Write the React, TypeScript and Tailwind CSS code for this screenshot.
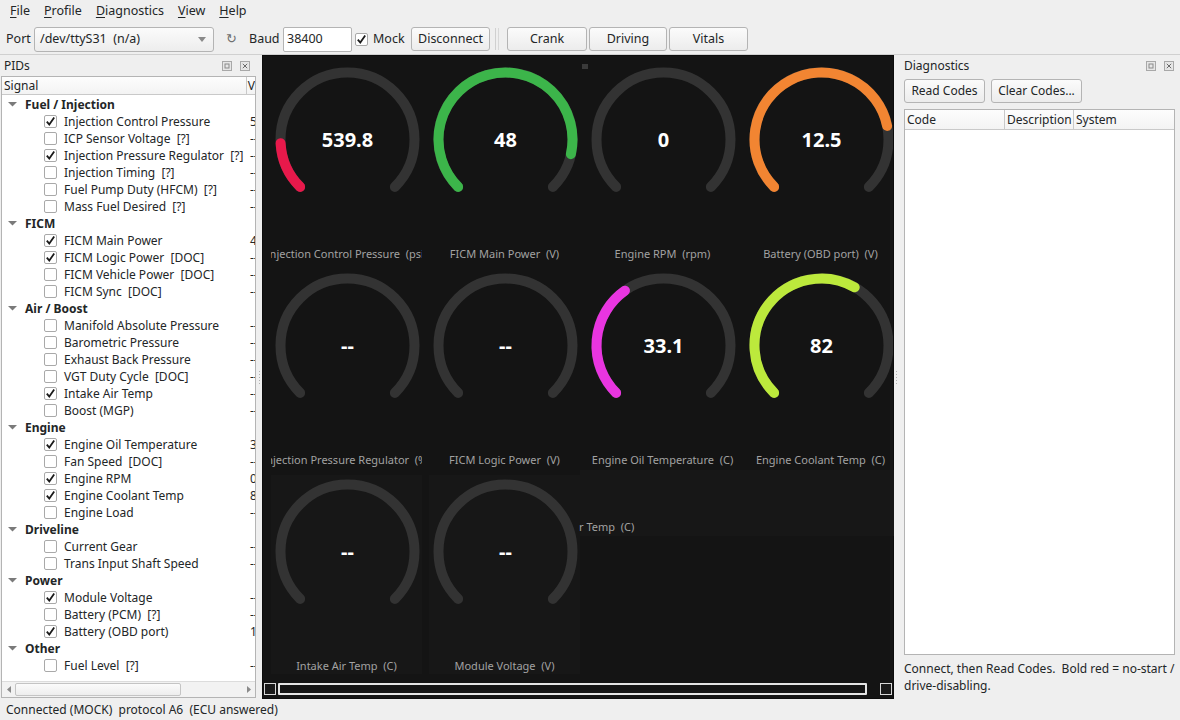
import React from "react";

type G = { label: string; value: string; frac?: number; color?: string };

const gauges: G[] = [
  { label: "Injection Control Pressure  (psi)", value: "539.8", frac: 0.155, color: "#e8194b" },
  { label: "FICM Main Power  (V)", value: "48", frac: 0.88, color: "#3cb54a" },
  { label: "Engine RPM  (rpm)", value: "0", frac: 0 },
  { label: "Battery (OBD port)  (V)", value: "12.5", frac: 0.79, color: "#f28532" },
  { label: "Injection Pressure Regulator  (%)", value: "--" },
  { label: "FICM Logic Power  (V)", value: "--" },
  { label: "Engine Oil Temperature  (C)", value: "33.1", frac: 0.37, color: "#e935e0" },
  { label: "Engine Coolant Temp  (C)", value: "82", frac: 0.61, color: "#bce93c" },
  { label: "Intake Air Temp  (C)", value: "--" },
  { label: "Module Voltage  (V)", value: "--" },
];

type Row = { group?: string; label?: string; checked?: boolean; value?: string };
const rows: Row[] = [
  { group: "Fuel / Injection" },
  { label: "Injection Control Pressure", checked: true, value: "539.8" },
  { label: "ICP Sensor Voltage  [?]", value: "--" },
  { label: "Injection Pressure Regulator  [?]", checked: true, value: "--" },
  { label: "Injection Timing  [?]", value: "--" },
  { label: "Fuel Pump Duty (HFCM)  [?]", value: "--" },
  { label: "Mass Fuel Desired  [?]", value: "--" },
  { group: "FICM" },
  { label: "FICM Main Power", checked: true, value: "48" },
  { label: "FICM Logic Power  [DOC]", checked: true, value: "--" },
  { label: "FICM Vehicle Power  [DOC]", value: "--" },
  { label: "FICM Sync  [DOC]", value: "--" },
  { group: "Air / Boost" },
  { label: "Manifold Absolute Pressure", value: "--" },
  { label: "Barometric Pressure", value: "--" },
  { label: "Exhaust Back Pressure", value: "--" },
  { label: "VGT Duty Cycle  [DOC]", value: "--" },
  { label: "Intake Air Temp", checked: true, value: "--" },
  { label: "Boost (MGP)", value: "--" },
  { group: "Engine" },
  { label: "Engine Oil Temperature", checked: true, value: "33.1" },
  { label: "Fan Speed  [DOC]", value: "--" },
  { label: "Engine RPM", checked: true, value: "0" },
  { label: "Engine Coolant Temp", checked: true, value: "82" },
  { label: "Engine Load", value: "--" },
  { group: "Driveline" },
  { label: "Current Gear", value: "--" },
  { label: "Trans Input Shaft Speed", value: "--" },
  { group: "Power" },
  { label: "Module Voltage", checked: true, value: "--" },
  { label: "Battery (PCM)  [?]", value: "--" },
  { label: "Battery (OBD port)", checked: true, value: "12.5" },
  { group: "Other" },
  { label: "Fuel Level  [?]", value: "--" },
];

function polar(cx: number, cy: number, r: number, deg: number) {
  const a = (deg * Math.PI) / 180;
  return [cx + r * Math.cos(a), cy + r * Math.sin(a)];
}
function arc(cx: number, cy: number, r: number, a0: number, a1: number) {
  const [x0, y0] = polar(cx, cy, r, a0);
  const [x1, y1] = polar(cx, cy, r, a1);
  const large = a1 - a0 > 180 ? 1 : 0;
  return `M${x0.toFixed(2)} ${y0.toFixed(2)} A${r} ${r} 0 ${large} 1 ${x1.toFixed(2)} ${y1.toFixed(2)}`;
}

function Gauge({ g, lighter }: { g: G; lighter?: boolean }) {
  const cx = 76.5;
  const cy = 76.5;
  const r = 67;
  return (
    <div className={`w-[151px] h-[199px] flex flex-col overflow-hidden ${lighter ? "bg-[#171717]" : ""}`}>
      <svg width="151" height="183" className="block shrink-0">
        <path d={arc(cx, cy, r, 135, 405)} stroke="#333333" strokeWidth="10" fill="none" strokeLinecap="round" />
        {g.frac !== undefined && g.frac > 0 && g.color && (
          <path d={arc(cx, cy, r, 135, 135 + 270 * g.frac)} stroke={g.color} strokeWidth="10" fill="none" strokeLinecap="round" />
        )}
        <text x={cx} y={cy + 7} textAnchor="middle" fill="#ffffff" fontSize="20" fontWeight="700" fontFamily="'Noto Sans', sans-serif">
          {g.value}
        </text>
      </svg>
      <div className="h-[16px] flex justify-center whitespace-pre text-[11px] leading-[16px] text-[#a2a2a2]">{g.label}</div>
    </div>
  );
}

function Check({ on }: { on?: boolean }) {
  return (
    <span className="w-[13px] h-[13px] border border-[#a9a9a9] bg-white rounded-[2px] flex items-center justify-center shrink-0">
      {on && (
        <svg width="11" height="11" viewBox="0 0 11 11">
          <path d="M1.8 5.6 L4.3 8.6 L9.2 1.6" stroke="#1a1a1a" strokeWidth="1.8" fill="none" />
        </svg>
      )}
    </span>
  );
}

function Btn({ children, w }: { children: React.ReactNode; w: string }) {
  return (
    <div className={`${w} h-[24px] flex items-center justify-center border border-[#b4b4b4] rounded-[3px] bg-gradient-to-b from-[#fbfbfb] to-[#ececec] shrink-0`}>
      {children}
    </div>
  );
}

function DockButtons() {
  return (
    <div className="flex items-center gap-[8px]">
      <svg width="10" height="10" viewBox="0 0 10 10">
        <rect x="0.5" y="0.5" width="9" height="9" fill="#e6e6e6" stroke="#a8a8a8" />
        <rect x="3" y="3" width="4" height="4" fill="none" stroke="#8a8a8a" />
      </svg>
      <svg width="10" height="10" viewBox="0 0 10 10">
        <rect x="0.5" y="0.5" width="9" height="9" fill="#e6e6e6" stroke="#a8a8a8" />
        <path d="M2.8 2.8 L7.2 7.2 M7.2 2.8 L2.8 7.2" stroke="#6a6a6a" strokeWidth="1" />
      </svg>
    </div>
  );
}

function U({ c }: { c: string }) {
  return <span className="underline underline-offset-2">{c}</span>;
}

export default function App() {
  return (
    <div className="w-[1180px] h-[720px] bg-[#efefef] flex flex-col overflow-hidden text-[12px] text-[#232627] font-['Noto_Sans',sans-serif]">
      {/* Menu bar */}
      <div className="h-[22px] flex items-center pl-[3px] shrink-0 text-[12.5px]">
        <div className="px-[7px]"><U c="F" />ile</div>
        <div className="px-[7px]"><U c="P" />rofile</div>
        <div className="px-[7px]"><U c="D" />iagnostics</div>
        <div className="px-[7px]"><U c="V" />iew</div>
        <div className="px-[7px]"><U c="H" />elp</div>
      </div>
      {/* Toolbar */}
      <div className="h-[33px] flex items-center shrink-0 border-b border-[#d0d0d0] pt-[2px] text-[12.5px]">
        <span className="ml-[6px] w-[28px]">Port</span>
        <div className="w-[180px] h-[25px] border border-[#b4b4b4] rounded-[3px] bg-gradient-to-b from-[#fbfbfb] to-[#ededed] flex items-center pl-[5px] pr-[7px] shrink-0">
          <span className="flex-1 whitespace-pre">/dev/ttyS31  (n/a)</span>
          <svg width="8" height="5" viewBox="0 0 8 5"><path d="M0 0 L8 0 L4 5 Z" fill="#8a8a8a" /></svg>
        </div>
        <span className="w-[35px] text-center text-[#707070]">↻</span>
        <span className="w-[34px]">Baud</span>
        <div className="w-[69px] h-[25px] border border-[#b4b4b4] rounded-[2px] bg-white flex items-center pl-[3px] shrink-0">38400</div>
        <div className="ml-[3px]"><Check on /></div>
        <span className="ml-[5px] w-[38px]">Mock</span>
        <Btn w="w-[79px]">Disconnect</Btn>
        <div className="w-[17px] h-[22px] flex gap-[2px] pl-[5px]">
          <div className="w-[1px] h-full bg-[#d0d0d0]" />
          <div className="w-[1px] h-full bg-[#d8d8d8]" />
        </div>
        <Btn w="w-[80px]">Crank</Btn>
        <div className="ml-[2px]"><Btn w="w-[78px]">Driving</Btn></div>
        <div className="ml-[2px]"><Btn w="w-[79px]">Vitals</Btn></div>
      </div>

      {/* Main */}
      <div className="flex-1 flex min-h-0">
        {/* Left dock */}
        <div className="w-[257px] flex flex-col shrink-0">
          <div className="h-[21px] flex items-center justify-between pl-[4px] pr-[7px] pt-[1px]">
            <span>PIDs</span>
            <DockButtons />
          </div>
          <div className="ml-[1px] w-[255px] h-[622px] border border-[#b4b4b4] bg-white flex flex-col overflow-hidden">
            <div className="h-[18px] flex shrink-0 border-b border-[#c9c9c9] bg-gradient-to-b from-[#fdfdfd] to-[#f3f3f3]">
              <div className="w-[246px] pl-[2px] border-r border-[#c9c9c9] leading-[17px]">Signal</div>
              <div className="pl-[1px] leading-[17px]">V</div>
            </div>
            <div className="flex-1 flex flex-col pt-[1px]">
              {rows.map((r, i) =>
                r.group ? (
                  <div key={i} className="h-[17px] flex items-center">
                    <svg width="9" height="5" viewBox="0 0 9 5" className="ml-[6px]"><path d="M0 0 L9 0 L4.5 4.5 Z" fill="#7a7a7a" /></svg>
                    <span className="ml-[8px] font-bold">{r.group}</span>
                  </div>
                ) : (
                  <div key={i} className="h-[17px] flex items-center">
                    <div className="w-[246px] flex items-center shrink-0">
                      <div className="ml-[42px]"><Check on={r.checked} /></div>
                      <span className="ml-[7px] whitespace-pre">{r.label}</span>
                    </div>
                    <span className="pl-[2px] whitespace-nowrap">{r.value}</span>
                  </div>
                )
              )}
            </div>
            {/* h scrollbar */}
            <div className="h-[16px] flex items-center border-t border-[#dcdcdc] bg-[#f2f2f2] shrink-0">
              <div className="w-[13px] h-full flex items-center justify-center">
                <svg width="4" height="7" viewBox="0 0 4 7"><path d="M4 0 L0 3.5 L4 7 Z" fill="#8a8a8a" /></svg>
              </div>
              <div className="w-[166px] h-[13px] border border-[#c4c4c4] rounded-[2px] bg-gradient-to-b from-[#fbfbfb] to-[#ededed]" />
              <div className="flex-1" />
              <div className="w-[13px] h-full flex items-center justify-center">
                <svg width="4" height="7" viewBox="0 0 4 7"><path d="M0 0 L4 3.5 L0 7 Z" fill="#8a8a8a" /></svg>
              </div>
            </div>
          </div>
        </div>
        {/* splitter */}
        <div className="w-[5px] flex items-center justify-center shrink-0">
          <div className="flex flex-col gap-[2px]">
            {[0, 1, 2, 3, 4].map((k) => <div key={k} className="w-[1px] h-[1px] bg-[#b0b0b0]" />)}
          </div>
        </div>
        {/* Central */}
        <div className="w-[632px] shrink-0 bg-[#141414] border border-[#0c0c0c] flex flex-col relative">
          <div className="flex-1 overflow-hidden">
            <div className="pl-[8px] pt-[7px] grid grid-cols-[151px_151px_151px_151px] gap-[7px] w-[700px]">
              {gauges.map((g, i) => (
                <Gauge key={i} g={g} lighter={i >= 8} />
              ))}
            </div>
          </div>
          {/* artifacts */}
          <div className="absolute left-[317px] top-[414px] w-[314px] h-[66px] bg-[#171717]" />
          <div className="absolute left-[316px] top-[463px] text-[11px] text-[#a2a2a2] whitespace-pre">r Temp  (C)</div>
          <div className="absolute left-[319px] top-[8px] w-[6px] h-[5px] bg-[#3a3a3a]" />
          {/* scrollbar */}
          <div className="h-[16px] flex items-center px-[1px] gap-[2px] shrink-0">
            <div className="w-[12px] h-[12px] border border-[#d8d8d8] bg-[#1a1a1a]" />
            <div className="w-[589px] h-[12px] border-2 border-[#e4e4e4] rounded-[1px] bg-[#141414]" />
            <div className="flex-1" />
            <div className="w-[12px] h-[12px] border border-[#d8d8d8] bg-[#1a1a1a]" />
          </div>
          <div className="h-[1px]" />
        </div>
        {/* splitter */}
        <div className="w-[4px] flex items-center justify-center shrink-0">
          <div className="flex flex-col gap-[2px]">
            {[0, 1, 2, 3, 4].map((k) => <div key={k} className="w-[1px] h-[1px] bg-[#b0b0b0]" />)}
          </div>
        </div>
        {/* Right dock */}
        <div className="flex-1 min-w-0 flex flex-col pl-[6px]">
          <div className="h-[21px] flex items-center justify-between pr-[6px] pt-[1px]">
            <span>Diagnostics</span>
            <DockButtons />
          </div>
          <div className="mt-[3px] flex gap-[6px]">
            <Btn w="w-[81px]">Read Codes</Btn>
            <Btn w="w-[91px]">Clear Codes...</Btn>
          </div>
          <div className="mt-[6px] w-[271px] h-[546px] border border-[#b4b4b4] bg-white flex flex-col">
            <div className="h-[20px] flex border-b border-[#c9c9c9] bg-gradient-to-b from-[#fdfdfd] to-[#f3f3f3] leading-[19px]">
              <div className="w-[100px] pl-[2px] border-r border-[#c9c9c9]">Code</div>
              <div className="w-[69px] pl-[2px] border-r border-[#c9c9c9]">Description</div>
              <div className="pl-[2px]">System</div>
            </div>
          </div>
          <div className="mt-[5px] leading-[17px] whitespace-pre">
            {"Connect, then Read Codes.  Bold red = no-start /"}
            <br />
            {"drive-disabling."}
          </div>
        </div>
      </div>

      {/* Status bar */}
      <div className="h-[21px] flex items-center pl-[6px] shrink-0 whitespace-pre">
        {"Connected (MOCK)  protocol A6  (ECU answered)"}
      </div>
    </div>
  );
}
